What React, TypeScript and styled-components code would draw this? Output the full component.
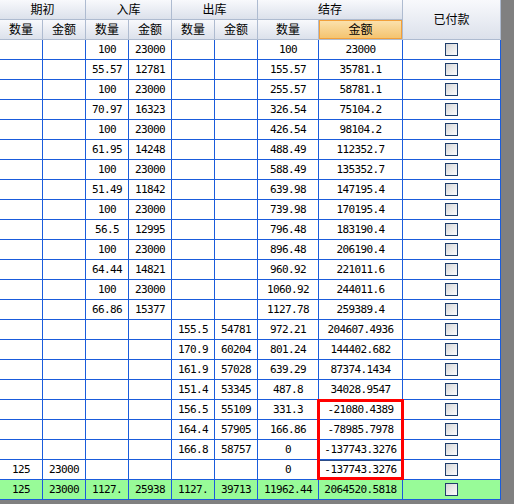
import React from 'react';
import styled, { createGlobalStyle } from 'styled-components';

const GlobalStyle = createGlobalStyle`
  html, body { margin: 0; padding: 0; background: #808080; }
  body { font-family: "DejaVu Sans Mono", monospace; color: #000; }
`;

const COLS = '43px 43px 43px 43px 43px 43px 61px 84px 98px';

const Sheet = styled.div`
  position: relative;
  width: 501px;
  background: #fff;
`;

const Header = styled.div`
  display: grid;
  grid-template-columns: ${COLS};
  grid-template-rows: 20px 20px;
`;

const HeadCell = styled.div<{ $col: string; $row: string; $hot?: boolean }>`
  grid-column: ${(p) => p.$col};
  grid-row: ${(p) => p.$row};
  box-sizing: border-box;
  border-right: 1px solid #aebbd0;
  border-bottom: 1px solid #aebbd0;
  background: ${(p) =>
    p.$hot ? 'linear-gradient(#fbe3b0, #f4c26c)' : 'linear-gradient(#f8f9fc, #dce1eb)'};
  box-shadow: ${(p) => (p.$hot ? 'inset 0 0 0 1px #f2a03a' : 'none')};
  display: flex;
  align-items: center;
  justify-content: center;
  padding-bottom: 2px;
  font-family: "Noto Sans CJK SC", sans-serif;
  font-size: 12px;
  color: #000;
`;

const Row = styled.div<{ $total?: boolean }>`
  display: grid;
  grid-template-columns: ${COLS};
  height: 20px;
  background: ${(p) => (p.$total ? '#98fb98' : '#fff')};
`;

const Cell = styled.div<{ $selected?: boolean }>`
  box-sizing: border-box;
  border-right: 1px solid #1a5cdc;
  border-bottom: 1px solid #1a5cdc;
  display: flex;
  align-items: center;
  justify-content: center;
  font-family: "DejaVu Sans Mono", monospace;
  font-size: 11px;
  letter-spacing: -0.6px;
  white-space: nowrap;
  overflow: hidden;
  box-shadow: ${(p) => (p.$selected ? 'inset 0 0 0 1px #2c4c86' : 'none')};
`;

const Check = styled.span`
  display: block;
  width: 13px;
  height: 13px;
  box-sizing: border-box;
  border: 1px solid #1f3e6b;
  background: linear-gradient(135deg, #d6d6d6, #fcfcfc);
`;

const Highlight = styled.div`
  position: absolute;
  left: 317px;
  top: 399px;
  width: 87px;
  height: 81px;
  box-sizing: border-box;
  border: 3px solid #ff0000;
  pointer-events: none;
`;

type R = [string, string, string, string, string, string, string, string];

const rows: R[] = [
  ['', '', '100', '23000', '', '', '100', '23000'],
  ['', '', '55.57', '12781', '', '', '155.57', '35781.1'],
  ['', '', '100', '23000', '', '', '255.57', '58781.1'],
  ['', '', '70.97', '16323', '', '', '326.54', '75104.2'],
  ['', '', '100', '23000', '', '', '426.54', '98104.2'],
  ['', '', '61.95', '14248', '', '', '488.49', '112352.7'],
  ['', '', '100', '23000', '', '', '588.49', '135352.7'],
  ['', '', '51.49', '11842', '', '', '639.98', '147195.4'],
  ['', '', '100', '23000', '', '', '739.98', '170195.4'],
  ['', '', '56.5', '12995', '', '', '796.48', '183190.4'],
  ['', '', '100', '23000', '', '', '896.48', '206190.4'],
  ['', '', '64.44', '14821', '', '', '960.92', '221011.6'],
  ['', '', '100', '23000', '', '', '1060.92', '244011.6'],
  ['', '', '66.86', '15377', '', '', '1127.78', '259389.4'],
  ['', '', '', '', '155.5', '54781', '972.21', '204607.4936'],
  ['', '', '', '', '170.9', '60204', '801.24', '144402.682'],
  ['', '', '', '', '161.9', '57028', '639.29', '87374.1434'],
  ['', '', '', '', '151.4', '53345', '487.8', '34028.9547'],
  ['', '', '', '', '156.5', '55109', '331.3', '-21080.4389'],
  ['', '', '', '', '164.4', '57905', '166.86', '-78985.7978'],
  ['', '', '', '', '166.8', '58757', '0', '-137743.3276'],
  ['125', '23000', '', '', '', '', '0', '-137743.3276'],
];

const total: R = ['125', '23000', '1127.', '25938', '1127.', '39713', '11962.44', '2064520.5818'];

export default function App() {
  return (
    <>
      <GlobalStyle />
      <Sheet>
        <Header>
          <HeadCell $col="1 / span 2" $row="1">期初</HeadCell>
          <HeadCell $col="3 / span 2" $row="1">入库</HeadCell>
          <HeadCell $col="5 / span 2" $row="1">出库</HeadCell>
          <HeadCell $col="7 / span 2" $row="1">结存</HeadCell>
          <HeadCell $col="9" $row="1 / span 2">已付款</HeadCell>
          <HeadCell $col="1" $row="2">数量</HeadCell>
          <HeadCell $col="2" $row="2">金额</HeadCell>
          <HeadCell $col="3" $row="2">数量</HeadCell>
          <HeadCell $col="4" $row="2">金额</HeadCell>
          <HeadCell $col="5" $row="2">数量</HeadCell>
          <HeadCell $col="6" $row="2">金额</HeadCell>
          <HeadCell $col="7" $row="2">数量</HeadCell>
          <HeadCell $col="8" $row="2" $hot>金额</HeadCell>
        </Header>
        {rows.map((r, i) => (
          <Row key={i}>
            {r.map((v, j) => (
              <Cell key={j} $selected={i === rows.length - 1 && j === 7}>
                {v}
              </Cell>
            ))}
            <Cell>
              <Check />
            </Cell>
          </Row>
        ))}
        <Row $total>
          {total.map((v, j) => (
            <Cell key={j}>{v}</Cell>
          ))}
          <Cell>
            <Check />
          </Cell>
        </Row>
        <Highlight />
      </Sheet>
    </>
  );
}
